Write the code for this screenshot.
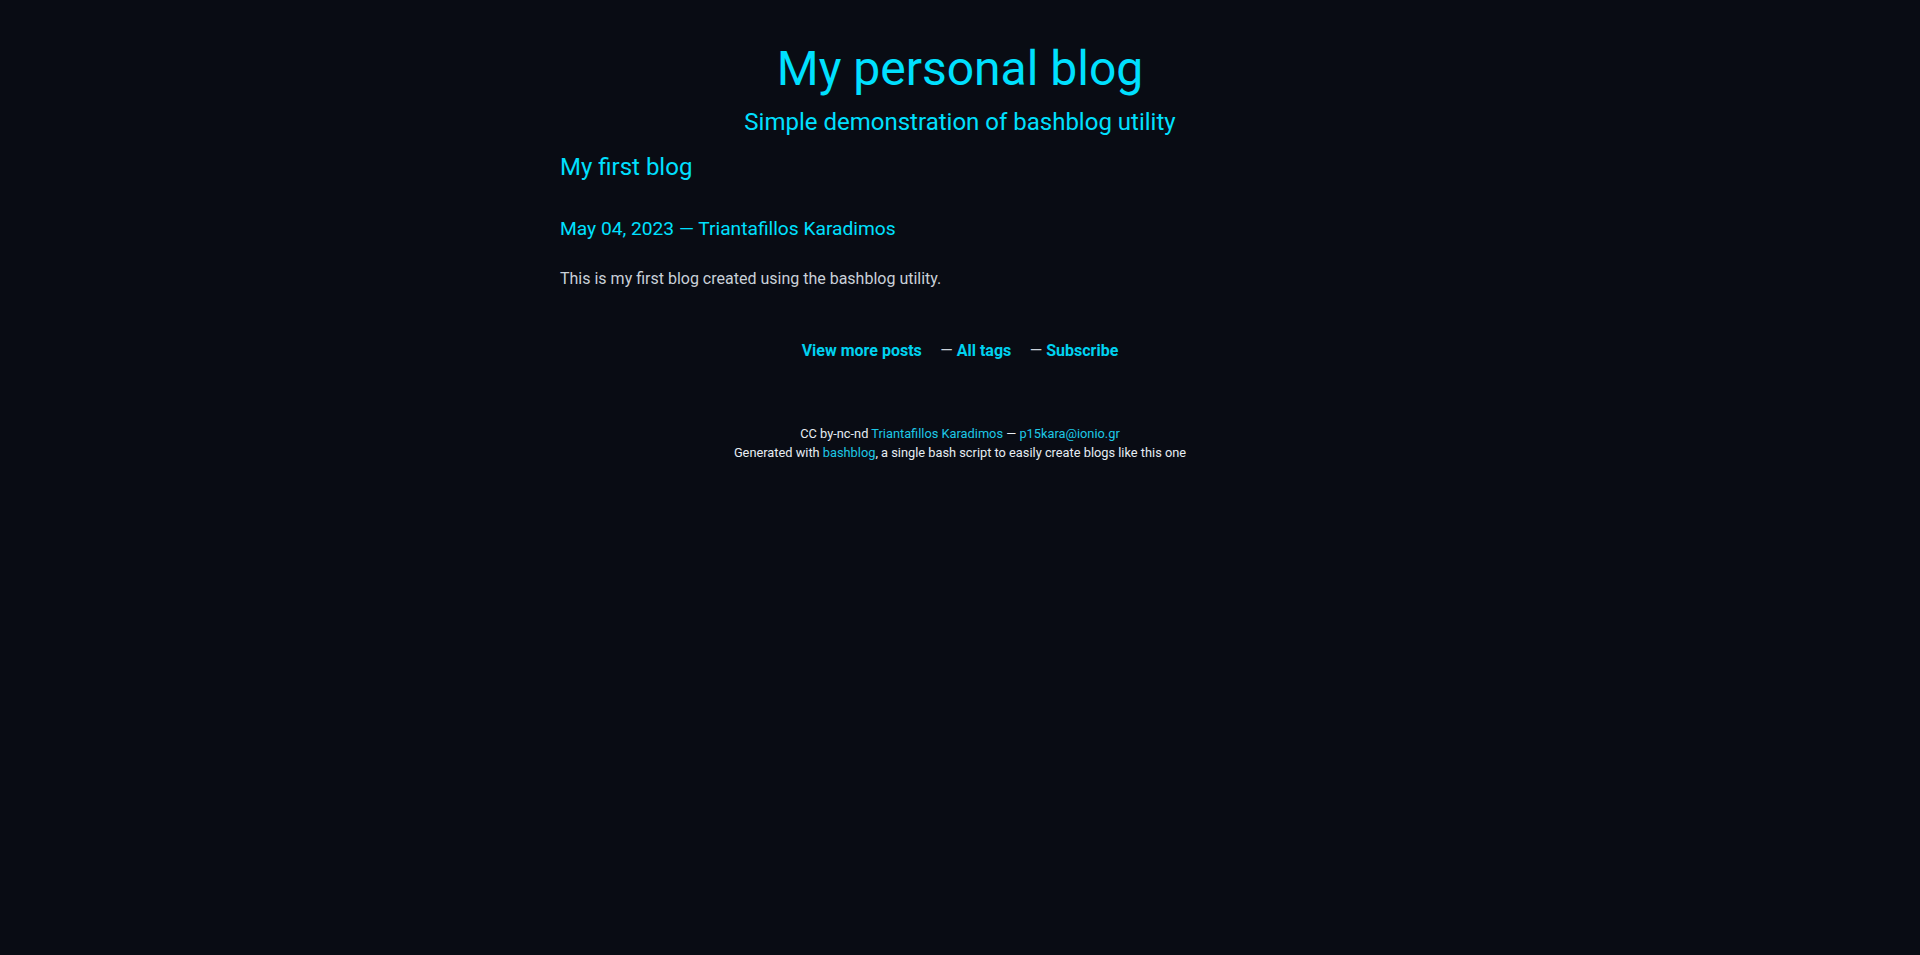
export default function App() {
  const cyan = "text-[#00e0ff]";
  return (
    <div className="min-h-screen bg-[#090c14] font-['Roboto',sans-serif]">
      <div className="w-[800px] mx-auto pt-[40px]">
        {/* Header */}
        <h1 className={`text-center text-[48px] leading-[57.6px] font-normal ${cyan}`}>
          My personal blog
        </h1>
        <p className={`text-center text-[24px] leading-[28.8px] mt-[10px] ${cyan}`}>
          Simple demonstration of bashblog utility
        </p>

        {/* Post */}
        <h2 className={`text-[24px] leading-[28.8px] mt-[17px] ${cyan}`}>
          <a href="#">My first blog</a>
        </h2>
        <div className={`text-[19.2px] leading-[23px] mt-[35px] ${cyan}`}>
          May 04, 2023 — Triantafillos Karadimos
        </div>
        <p className="text-[16px] leading-[24px] mt-[27px] text-[#c9d1d9]">
          This is my first blog created using the bashblog utility.
        </p>

        {/* Nav */}
        <div className="mt-[48px] text-center text-[16px] leading-[24px] text-[#c9d1d9]">
          <a href="#" className="font-bold text-[#00d2f0] mr-[18.5px]">View more posts</a>
          <span>— </span>
          <a href="#" className="font-bold text-[#00d2f0] mr-[18.5px]">All tags</a>
          <span>— </span>
          <a href="#" className="font-bold text-[#00d2f0]">Subscribe</a>
        </div>

        {/* Footer */}
        <div className="mt-[61px] text-center text-[12.8px] leading-[19.2px] text-[#e6edf3]">
          <div>
            CC by-nc-nd <a href="#" className="text-[#1ec8e6]">Triantafillos Karadimos</a> —{" "}
            <a href="#" className="text-[#1ec8e6]">p15kara@ionio.gr</a>
          </div>
          <div>
            Generated with <a href="#" className="text-[#1ec8e6]">bashblog</a>, a single bash script to easily create blogs like this one
          </div>
        </div>
      </div>
    </div>
  );
}
